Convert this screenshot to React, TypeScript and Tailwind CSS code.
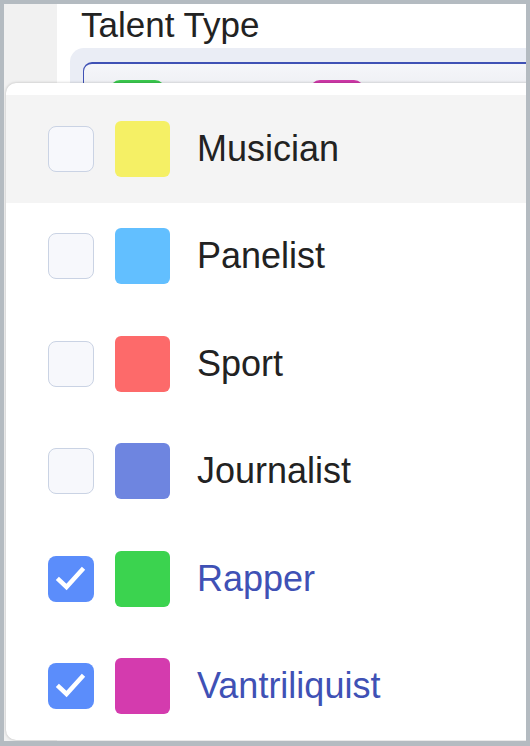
import React from 'react';

type Talent = { name: string; color: string; checked: boolean };

const talents: Talent[] = [
  { name: 'Musician', color: 'bg-[#f5f065]', checked: false },
  { name: 'Panelist', color: 'bg-[#62bfff]', checked: false },
  { name: 'Sport', color: 'bg-[#fd6a6a]', checked: false },
  { name: 'Journalist', color: 'bg-[#6e85e0]', checked: false },
  { name: 'Rapper', color: 'bg-[#3bd34f]', checked: true },
  { name: 'Vantriliquist', color: 'bg-[#d43bae]', checked: true },
];

function Checkbox({ checked }: { checked: boolean }) {
  if (!checked) {
    return <div className="h-[46px] w-[46px] shrink-0 rounded-[8px] border-[1.5px] border-[#cad3e4] bg-[#f7f8fc]" />;
  }
  return (
    <div className="flex h-[46px] w-[46px] shrink-0 items-center justify-center rounded-[8px] bg-[#5b8dfb]">
      <svg width="46" height="46" viewBox="0 0 46 46">
        <polyline points="11,24 18.5,31 34,14" fill="none" stroke="white" strokeWidth="4.5" strokeLinecap="square" />
      </svg>
    </div>
  );
}

export default function App() {
  return (
    <div className="h-[746px] w-[530px] bg-[#b4bbc1] pb-[5px] pl-[4px] pr-[4px] pt-[4px] font-['Liberation_Sans',Arial,sans-serif]">
      <div className="relative flex h-full overflow-hidden bg-white">
        <div className="w-[53px] shrink-0 bg-[#f1f1f1]" />
        <div className="flex-1">
          <div className="pl-[24px] pt-[1px] text-[35px] leading-[40px] text-[#222]">Talent Type</div>
          <div className="ml-[13px] mt-[3px] h-[60px] rounded-tl-[14px] bg-[#eaedf5] pl-[13px] pt-[14px]">
            <div className="flex h-full gap-[145px] rounded-tl-[9px] border-l-[1.5px] border-t-[2px] border-[#3f51b5] bg-gradient-to-b from-[#f5f6fa] to-[#e8eaee] pl-[26px] pt-[16px]">
              <div className="h-[30px] w-[55px] rounded-t-[10px] bg-[#3bc94e]" />
              <div className="h-[30px] w-[54px] rounded-t-[10px] bg-[#cf38a8]" />
            </div>
          </div>
        </div>

        <div className="absolute bottom-[1px] left-[2px] right-[-10px] top-[79px] rounded-l-[10px] bg-white pt-[12px] shadow-[0_0_3px_rgba(0,0,0,0.25)]">
          {talents.map((t, i) => (
            <div
              key={t.name}
              className={`flex h-[107.5px] items-center pl-[42px] ${i === 0 ? 'bg-[#f4f4f4]' : ''}`}
            >
              <Checkbox checked={t.checked} />
              <div className={`ml-[21px] h-[56px] w-[55px] shrink-0 rounded-[6px] ${t.color}`} />
              <span className={`ml-[27px] text-[36px] ${t.checked ? 'text-[#3f51b5]' : 'text-[#222]'}`}>{t.name}</span>
            </div>
          ))}
        </div>
      </div>
    </div>
  );
}
